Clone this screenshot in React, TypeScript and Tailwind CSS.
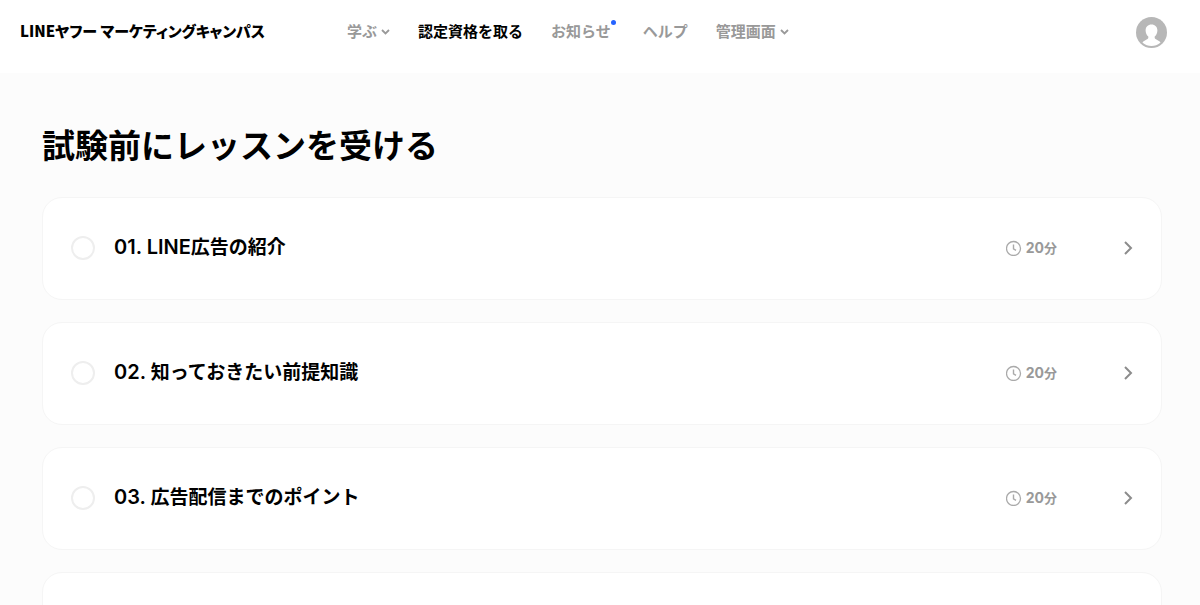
import type { ReactNode } from 'react'
import clsx from 'clsx'

type NavItem = {
  label: string
  active?: boolean
  menu?: boolean
  unread?: boolean
}

const navItems: NavItem[] = [
  { label: '学ぶ', menu: true },
  { label: '認定資格を取る', active: true },
  { label: 'お知らせ', unread: true },
  { label: 'ヘルプ' },
  { label: '管理画面', menu: true },
]

const lessons = [
  { no: '01', title: 'LINE広告の紹介', time: 20 },
  { no: '02', title: '知っておきたい前提知識', time: 20 },
  { no: '03', title: '広告配信までのポイント', time: 20 },
]

export default function App() {
  return (
    <div className="min-h-screen bg-[#fcfcfc] font-['Noto_Sans_CJK_JP',sans-serif] text-black">
      <Header />
      <main className="pt-[47px] pr-[38px] pl-[42px]">
        <h1 className="text-[33px] leading-[48px] font-bold">
          試験前にレッスンを受ける
        </h1>
        <ul className="mt-[29px] flex flex-col gap-[22px]">
          {lessons.map(l => (
            <Lesson key={l.no} {...l} />
          ))}
          <li className="h-[103px] rounded-[20px] border border-[#f5f5f5] bg-white" />
        </ul>
      </main>
    </div>
  )
}

const Header = () => (
  <header className="flex h-[73px] items-start bg-white pt-4 pr-8 pl-5">
    <a
      href="#"
      className="w-[327px] shrink-0 text-[15px] leading-[30px] font-black whitespace-nowrap [font-feature-settings:'palt']"
    >
      LINEヤフー マーケティングキャンパス
    </a>
    <nav className="flex flex-1 gap-7">
      {navItems.map(item => (
        <NavLink key={item.label} {...item} />
      ))}
    </nav>
    <button aria-label="アカウント" className="h-8 w-8 shrink-0">
      <Avatar />
    </button>
  </header>
)

const NavLink = ({ label, active, menu, unread }: NavItem) => {
  const style = clsx(
    'relative flex items-center gap-1 text-[15px] leading-[30px] font-bold whitespace-nowrap',
    active ? 'text-black' : 'text-[#999]',
    unread && 'pr-1'
  )

  if (menu) {
    return (
      <button className={style}>
        {label}
        <svg viewBox="0 0 9 8" className="h-2 w-[9px]" fill="none">
          <path d="M1 3l3.5 3.5L8 3" stroke="currentColor" strokeWidth="1.8" />
        </svg>
      </button>
    )
  }

  return (
    <a href="#" className={style}>
      {label}
      {unread && (
        <span className="absolute top-1 -right-px h-[5px] w-[5px] rounded-full bg-[#2563ff]" />
      )}
    </a>
  )
}

const Avatar = () => (
  <svg viewBox="0 0 32 32" className="h-8 w-8">
    <circle cx="15.5" cy="16.5" r="15.5" fill="#b7b7b7" />
    <path
      d="M15.5 8.5c-3.6 0-5.9 2.4-5.9 5.9 0 2.6 1.200 4.700 2.700 6.100.3 1.700-.3 2.300-1.700 3.100l-3.300 1.900c-.8.500-.9 1.100-.3 1.600 2.300 1.900 5.200 2.900 8.500 2.900s6.200-1 8.500-2.900c.6-.5.500-1.100-.3-1.600l-3.300-1.900c-1.400-.8-2-1.400-1.700-3.100 1.500-1.400 2.700-3.500 2.700-6.100 0-3.500-2.300-5.900-5.900-5.900z"
      fill="#fff"
    />
  </svg>
)

type LessonProps = { no: string; title: string; time: number }

const Lesson = ({ no, title, time }: LessonProps) => (
  <li className="flex h-[103px] items-center rounded-[20px] border border-[#f5f5f5] bg-white px-7 pb-[2px]">
    <input
      type="checkbox"
      aria-label={title}
      className="h-6 w-6 shrink-0 appearance-none rounded-full border-2 border-[#eee]"
    />
    <h2 className="ml-[19px] flex-1 pb-[2px] text-[19px] leading-7 font-bold">
      <a href="#">
        <Latin>{no}. </Latin>
        {title.startsWith('LINE') ? (
          <>
            <Latin>LINE</Latin>
            {title.slice(4)}
          </>
        ) : (
          title
        )}
      </a>
    </h2>
    <p className="flex items-center gap-1 text-[13px] leading-5 font-bold text-[#999]">
      <svg viewBox="0 0 16 16" className="h-4 w-4" fill="none" stroke="#aaa">
        <circle cx="7.5" cy="8.5" r="7" strokeWidth="1.3" />
        <path d="M7.5 4.5v4.3l2.500 1.500" strokeWidth="1.4" />
      </svg>
      <span>
        <span className="font-['Inter',sans-serif] text-sm leading-5">{time}</span>
        分
      </span>
    </p>
    <a href="#" aria-label={`${title}を開く`} className="ml-[67px]">
      <svg viewBox="0 0 9 14" className="h-[14px] w-[9px]" fill="none">
        <path d="M1 1l6 6-6 6" stroke="#8c8c8c" strokeWidth="2" />
      </svg>
    </a>
  </li>
)

// digits and roman letters run slightly larger than the kanji beside them
const Latin = ({ children }: { children: ReactNode }) => (
  <span className="font-['Inter',sans-serif] text-xl leading-7 font-semibold">
    {children}
  </span>
)
